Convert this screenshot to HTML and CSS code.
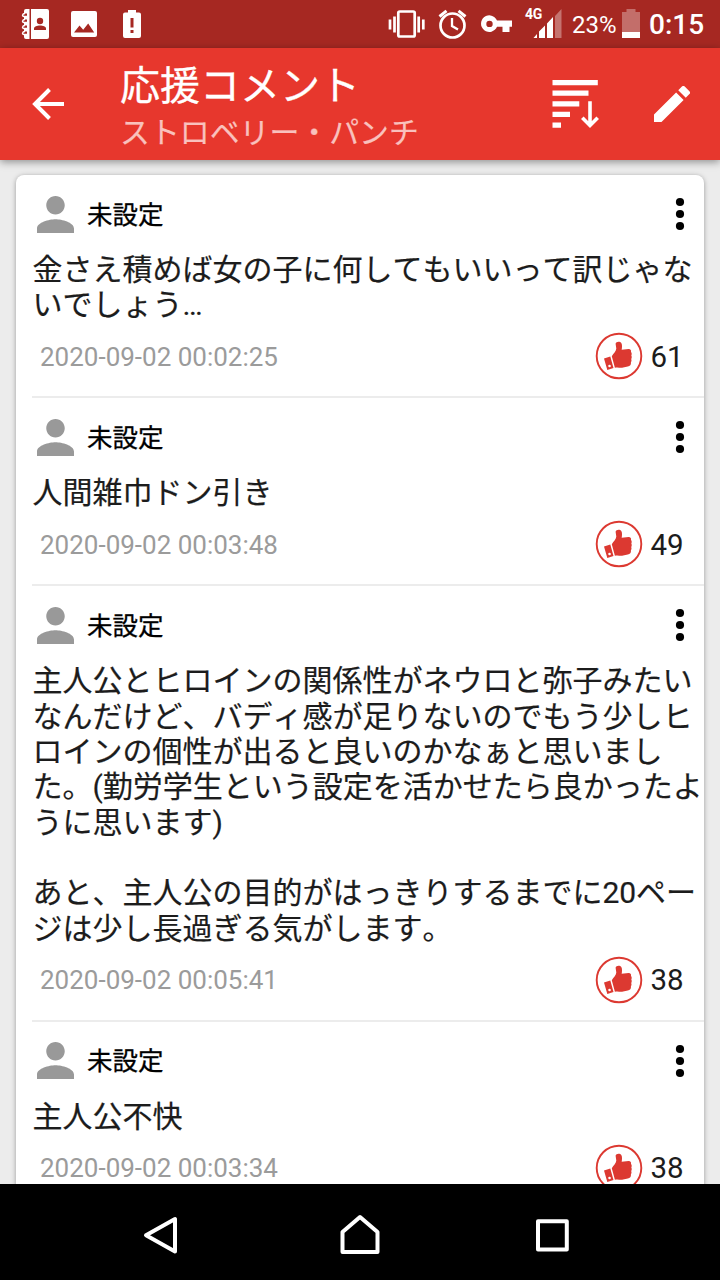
FILE: index.html
```html
<!DOCTYPE html>
<html lang="ja">
<head>
<meta charset="utf-8">
<title>応援コメント</title>
<link rel="stylesheet" href="styles.css">
</head>
<body>
<svg width="0" height="0" class="defs">
  <symbol id="person" viewBox="4 4 16 16"><path fill="#999" d="M12 12c2.21 0 4-1.79 4-4s-1.79-4-4-4-4 1.79-4 4 1.79 4 4 4zm0 2c-2.67 0-8 1.34-8 4v2h16v-2c0-2.66-5.33-4-8-4z"/></symbol>
  <symbol id="dots" viewBox="0 0 10 34"><circle cx="5" cy="5" r="4.1"/><circle cx="5" cy="17" r="4.1"/><circle cx="5" cy="29" r="4.1"/></symbol>
  <symbol id="thumb" viewBox="0 0 48 48">
    <circle cx="24" cy="24" r="22.3" fill="#fff" stroke="#dc3931" stroke-width="1.9"/>
    <path fill="#dc3931" d="M16.800 24.300C18.300 21.500 21.200 19.500 21.300 16.600L20.600 11.800C20.800 9.400 25.200 9 26.300 11.100C27.400 13.100 27 15.500 26.700 17.700L33.600 17.100C35.500 17 36.500 18.500 36 20C36.900 21 36.900 22.500 36.300 23.600C36.900 24.700 36.900 26 36.200 27.100C36.700 28.300 36.600 29.500 35.900 30.500C36.300 32.800 35 34.200 32.800 34.600L27 35.700C24.500 36.100 23.200 35 19.900 35.800Z"/>
    <path fill="#dc3931" fill-rule="evenodd" d="M9 26.400L15.300 24.600L18.500 35.900L12.300 37.900zM14.500 32.700a1.300 1.300 0 1 0 .1 2.600 1.300 1.300 0 0 0-.1-2.600z"/>
  </symbol>
</svg>
<div class="screen">
  <header class="status">
    <svg class="notices" width="160" height="48" viewBox="0 0 160 48" fill="#fff">
      <path d="M26 9h3.500v30H26a2 2 0 0 1-2-2V11a2 2 0 0 1 2-2zM31 9h16a2 2 0 0 1 2 2v26a2 2 0 0 1-2 2H31z"/>
      <g fill="none" stroke="#a62822" stroke-width="3"><path d="M23 15h4M23 21h4M23 27h4M23 33h4"/></g>
      <g fill="none" stroke="#fff" stroke-width="1.500"><path d="M27 16.500h-3c-2 0-2-3 1-3M27 22.500h-3c-2 0-2-3 1-3M27 28.500h-3c-2 0-2-3 1-3M27 34.500h-3c-2 0-2-3 1-3"/></g>
      <circle cx="40" cy="21" r="3.200" fill="#a62822"/><path fill="#a62822" d="M34 30v-1.500c0-2 3-3 6-3s6 1 6 3V30z"/>
      <rect x="71" y="11" width="26" height="26" rx="2"/><path fill="#a62822" d="M74 32.500l5.500-7 3.700 4.200 5-6.200 6 9z"/>
      <path d="M128 10h8v2.500h3a2 2 0 0 1 2 2V36a2 2 0 0 1-2 2h-14a2 2 0 0 1-2-2V14.500a2 2 0 0 1 2-2h3z"/><path fill="#a62822" d="M130.500 18h3v9.500h-3zM130.500 30h3v3h-3z"/>
    </svg>
    <div class="indicators">
      <svg width="134" height="48" viewBox="386 0 134 48" fill="none" stroke="#fff">
        <rect x="398.300" y="11.500" width="16.400" height="25" rx="1.500" stroke-width="2.700"/><path stroke-width="2.700" d="M394.500 16.500v16M390 19.500v10M418.700 16.500v16M423.300 19.500v10"/>
        <circle cx="452.500" cy="25.500" r="12" stroke-width="2.700"/><path stroke-width="2.300" d="M452 18v8l6 3.500"/><path stroke-width="3" d="M439.500 16.500l7-5.600M465.500 16.500l-7-5.600"/>
        <path fill="#fff" stroke="none" fill-rule="evenodd" d="M497 20.500h15v6.300h-2.500V32h-7v-5.200H497a8.300 8.300 0 1 1 0-6.300zM489.500 20.700a3.200 3.200 0 1 0 0 6.400 3.200 3.200 0 0 0 0-6.400z"/>
      </svg>
      <div class="network"><span class="generation">4G</span>
        <svg width="30" height="30" viewBox="532 10 30 30" fill="#fff"><path d="M533.500 39l3.500-4v4zM539 32.500l6-6V39h-6zM547 24.500l6-6.500v21h-6z"/><path fill-opacity=".35" d="M555 17l6.500-7v29H555z"/></svg>
      </div>
      <span class="percent">23%</span>
      <svg class="battery" width="20" height="30" viewBox="0 0 20 30" fill="#fff"><path fill-opacity=".33" d="M5.500 0h9v3H19v20H1V3h4.500z"/><path d="M1 23h18v6H1z"/></svg>
      <span class="clock">0:15</span>
    </div>
  </header>
  <div class="appbar">
    <svg class="back" width="32" height="32" viewBox="0 0 32 32"><path fill="none" stroke="#fff" stroke-width="4" d="M32 16H3M17.500 1.500L3 16l14.500 14.500"/></svg>
    <div class="titles"><h1>応援コメント</h1><p>ストロベリー・パンチ</p></div>
    <svg class="sort" width="48" height="50" viewBox="0 0 48 50" fill="#fff"><path d="M.5 1h45.300v5.300H.5zM.5 11.500h36v5.200H.5zM.5 22.200h26.800v5.200H.5zM.5 32.800h17.500v5.200H.5zM.5 43.500H9v5.200H.5z"/><path fill="none" stroke="#fff" stroke-width="3.600" d="M38 22.200V46M30.300 38.700l7.700 7.700 7.700-7.700"/></svg>
    <svg class="edit" width="36" height="36" viewBox="3 3 18 18"><path fill="#fff" d="M3 17.250V21h3.750L17.810 9.940l-3.750-3.750L3 17.250zM20.710 7.040a.996.996 0 0 0 0-1.410l-2.340-2.340a.996.996 0 0 0-1.410 0l-1.830 1.830 3.750 3.750 1.830-1.830z"/></svg>
  </div>
  <main class="content">
    <div class="card">
      <article class="item">
        <div class="user"><svg class="avatar"><use href="#person"/></svg><span class="name">未設定</span><svg class="more"><use href="#dots"/></svg></div>
        <p class="comment">金さえ積めば女の子に何してもいいって訳じゃな<br>いでしょう…</p>
        <div class="meta"><time>2020-09-02 00:02:25</time><svg class="like"><use href="#thumb"/></svg><span class="count">61</span></div>
      </article>
      <article class="item">
        <div class="user"><svg class="avatar"><use href="#person"/></svg><span class="name">未設定</span><svg class="more"><use href="#dots"/></svg></div>
        <p class="comment">人間雑巾ドン引き</p>
        <div class="meta"><time>2020-09-02 00:03:48</time><svg class="like"><use href="#thumb"/></svg><span class="count">49</span></div>
      </article>
      <article class="item">
        <div class="user"><svg class="avatar"><use href="#person"/></svg><span class="name">未設定</span><svg class="more"><use href="#dots"/></svg></div>
        <p class="comment">主人公とヒロインの関係性がネウロと弥子みたい<br>なんだけど、バディ感が足りないのでもう少しヒ<br>ロインの個性が出ると良いのかなぁと思いまし<br>た。(勤労学生という設定を活かせたら良かったよ<br>うに思います)<br><br>あと、主人公の目的がはっきりするまでに20ペー<br>ジは少し長過ぎる気がします。</p>
        <div class="meta"><time>2020-09-02 00:05:41</time><svg class="like"><use href="#thumb"/></svg><span class="count">38</span></div>
      </article>
      <article class="item">
        <div class="user"><svg class="avatar"><use href="#person"/></svg><span class="name">未設定</span><svg class="more"><use href="#dots"/></svg></div>
        <p class="comment">主人公不快</p>
        <div class="meta"><time>2020-09-02 00:03:34</time><svg class="like"><use href="#thumb"/></svg><span class="count">38</span></div>
      </article>
    </div>
  </main>
  <nav class="navbar">
    <svg width="44" height="44" viewBox="140 1213 44 44"><path d="M175 1219v32.500l-29-16.200z"/></svg>
    <svg width="44" height="44" viewBox="338 1213 44 44"><path d="M342.500 1252v-20l17.500-15 17.500 15v20z"/></svg>
    <svg width="44" height="44" viewBox="532 1213 44 44"><path d="M538 1221.300h28.800v28.200H538z"/></svg>
  </nav>
</div>
</body>
</html>
```

FILE: styles.css
```css
* { box-sizing: border-box; }
body, h1, p { margin: 0; }
body { font-family: Roboto, "Noto Sans CJK JP", sans-serif; font-kerning: none; background: #000; }
svg { display: block; flex: none; }
.defs { position: absolute; }
.screen { width: 720px; height: 1280px; display: flex; flex-direction: column; overflow: hidden; }

.status { flex: none; height: 48px; display: flex; justify-content: space-between; background: #a62822; color: #fff; }
.indicators { display: flex; align-items: center; padding-right: 16px; white-space: nowrap; }
.network { display: flex; align-items: flex-end; height: 48px; padding-bottom: 9px; margin-left: 5px; width: 37px; }
.network svg { margin-left: -9px; }
.generation { width: 16px; font-size: 14px; font-weight: 700; line-height: 14px; letter-spacing: -.3px; align-self: flex-start; margin-top: 7px; }
.percent { margin-left: 10px; width: 43px; font-size: 24px; line-height: 48px; padding-top: 2px; }
.battery { margin-left: 6px; }
.clock { margin-left: 8px; font-size: 28px; font-weight: 500; line-height: 48px; padding-top: 2px; width: 55px; }

.appbar { flex: none; height: 112px; display: flex; align-items: center; padding: 0 30px 0 32px; background: #e7372d; color: #fff; z-index: 1; box-shadow: 0 2px 8px rgba(0, 0, 0, .4); }
.titles { flex: 1; margin-left: 56px; padding-top: 9px; white-space: nowrap; }
.titles h1 { font-size: 40px; line-height: 48px; font-weight: 400; -webkit-text-stroke: .3px; }
.titles p { font-size: 29.9px; line-height: 44px; color: #f9c1bd; -webkit-text-stroke: .2px; }
.edit { margin-left: 54px; }

.content { flex: 1; min-height: 0; overflow: hidden; padding: 15px 16px 0; background: #ececec; }
.card { background: #fff; border-radius: 8px; box-shadow: 0 1px 5px rgba(0, 0, 0, .35); padding-left: 16px; }
.item { border-bottom: 2px solid #ececec; }
.user { height: 77px; display: flex; align-items: center; padding: 1px 19px 0 5px; color: #000; }
.avatar { width: 37px; height: 37px; margin-right: 13px; }
.name { font-size: 25.5px; line-height: 38px; padding-top: 1px; -webkit-text-stroke: .3px; }
.more { width: 10px; height: 34px; margin-left: auto; }
.comment { font-size: 30px; line-height: 35.33px; white-space: nowrap; color: #1c1c1c; padding-left: .4px; -webkit-text-stroke: .2px; }
.meta { height: 73.67px; display: flex; align-items: center; padding: 0 19.5px 6px 8px; font-size: 26px; line-height: 26px; color: #9b9b9b; }
.meta time { padding-top: 1px; }
.like { width: 48px; height: 48px; margin-left: auto; }
.count { width: 34px; margin-left: 8px; padding-top: 1px; font-size: 29.5px; line-height: 28px; color: #1c1c1c; }

.navbar { flex: none; height: 96px; display: flex; align-items: center; padding: 6px 0 0 140px; background: #000; }
.navbar svg:nth-child(2) { margin: 0 150px 0 154px; }
.navbar path { fill: none; stroke: #fff; stroke-width: 4; stroke-linejoin: round; }
```
